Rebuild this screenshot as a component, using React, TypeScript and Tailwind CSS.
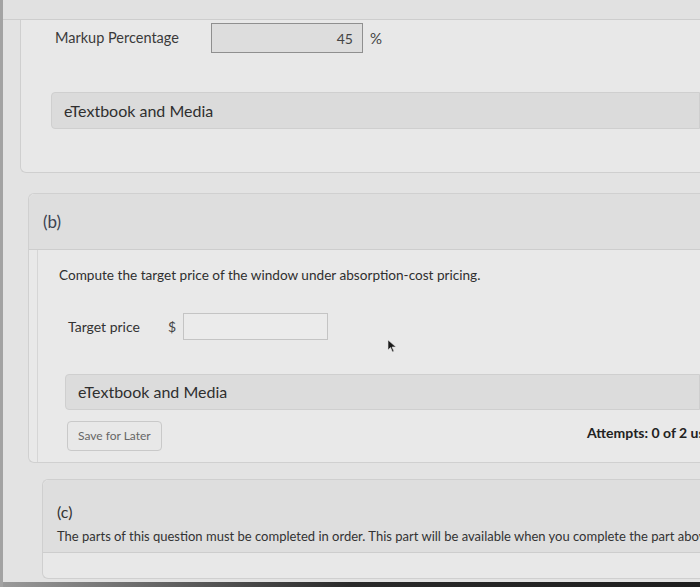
export default function App() {
  return (
    <div
      className="relative w-[700px] h-[587px] overflow-hidden bg-[#e3e3e3] border-l-[3px] border-[#a3a3a3] text-[#333]"
      style={{ fontFamily: "Lato, 'Open Sans', sans-serif" }}
    >
      {/* top strip */}
      <div className="h-[20px] bg-[#e1e1e1] border-b border-[#cdcdcd]" />

      {/* part (a) end */}
      <div className="ml-[17px] h-[153px] bg-[#e8e8e8] border-l border-b border-[#cfcfcf] rounded-bl-md">
        <div className="flex items-center h-[33px] pt-[3px]">
          <span className="pl-[34px] w-[190px] text-[14.5px] text-[#3a3a3a]">Markup Percentage</span>
          <div className="w-[152px] h-[30px] bg-[#dddddd] border border-[#8f8f8f] flex items-center justify-end pr-[9px] text-[14px] text-[#444]">
            45
          </div>
          <span className="ml-[7px] text-[15px] text-[#444]">%</span>
        </div>
        <div className="mt-[39px] ml-[30px] h-[37px] bg-[#dbdbdb] border border-[#cfcfcf] rounded-l-sm flex items-center pl-[12px] text-[16px] text-[#2f2f2f]">
          eTextbook and Media
        </div>
      </div>

      {/* part (b) */}
      <div className="mt-[20px] ml-[25px] h-[270px] border-l border-b border-t border-[#d0d0d0] rounded-l-md bg-[#e9e9e9] flex flex-col">
        <div className="h-[56px] bg-[#dedede] border-b border-[#cdcdcd] flex items-center pl-[14px] text-[17px] text-[#3b4250] rounded-tl-md">
          (b)
        </div>
        <div className="ml-[8px] flex-1 border-l border-[#d6d6d6] relative">
          <p className="pl-[21px] pt-[15px] text-[13.6px] text-[#2f2f2f]">
            Compute the target price of the window under absorption-cost pricing.
          </p>
          <div className="flex items-center mt-[28px] pl-[30px]">
            <span className="w-[100px] text-[14px] text-[#333]">Target price</span>
            <span className="w-[15px] text-[14px] text-[#444]">$</span>
            <div className="w-[145px] h-[27px] bg-[#ebebeb] border border-[#c4c4c4]" />
          </div>
          <div className="mt-[34px] ml-[27px] h-[36px] bg-[#dcdcdc] border border-[#cfcfcf] rounded-l-sm flex items-center pl-[12px] text-[16px] text-[#2f2f2f]">
            eTextbook and Media
          </div>
          <div className="flex items-start mt-[11px] ml-[29px]">
            <button className="h-[30px] px-[10px] border border-[#c9c9c9] rounded-sm bg-[#e8e8e8] text-[12px] text-[#666]">
              Save for Later
            </button>
            <span className="ml-auto mt-[1px] -mr-[33px] whitespace-nowrap text-[14px] font-bold text-[#222] w-[146px]">
              Attempts: 0 of 2 used
            </span>
          </div>
          {/* mouse cursor */}
          <svg
            className="absolute left-[349px] top-[90px]"
            width="11"
            height="13"
            viewBox="0 0 11 13"
          >
            <path d="M1 0 L1 10 L3.5 7.5 L5.5 12 L7 11.3 L5 7 L9 7 Z" fill="#1a1a1a" stroke="#e0e0e0" strokeWidth="0.6" />
          </svg>
        </div>
      </div>

      {/* part (c) */}
      <div className="mt-[16px] ml-[39px] h-[100px] border-l border-t border-b border-[#cfcfcf] rounded-l-md bg-[#e8e8e8] flex flex-col">
        <div className="h-[73px] bg-[#dedede] border-b border-[#cdcdcd] rounded-tl-md pl-[14px] pt-[20px] whitespace-nowrap">
          <div className="text-[16px] text-[#333] leading-[24px]">(c)</div>
          <div className="text-[13px] text-[#333] leading-[22px] mt-[1px]">
            The parts of this question must be completed in order. This part will be available when you complete the part above.
          </div>
        </div>
      </div>

      {/* screen bezel */}
      <div className="absolute left-0 right-0 bottom-0 h-[5px] bg-gradient-to-r from-[#9a9a9a] via-[#2a2a2a] to-[#1e1e1e]" />
    </div>
  );
}
